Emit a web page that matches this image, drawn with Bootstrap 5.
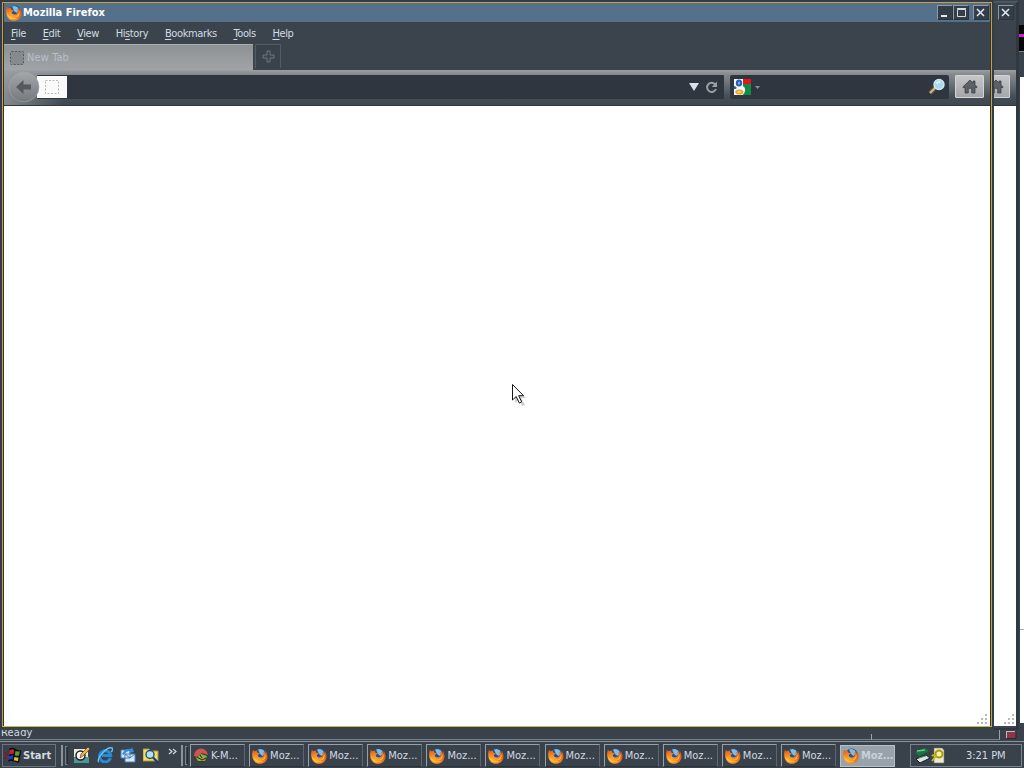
<!DOCTYPE html>
<html lang="en">
<head>
    <meta charset="UTF-8">
    <meta name="viewport" content="width=device-width, initial-scale=1.0">
    <title>Mozilla Firefox</title>
    <link rel="stylesheet" href="https://cdn.jsdelivr.net/npm/bootstrap@5.3.0/dist/css/bootstrap.min.css">
    <style>
        body {
            width: 1024px;
            height: 768px;
            background: #3b444d;
            color: #d3dae2;
            font-family: "DejaVu Sans Condensed", "DejaVu Sans", sans-serif;
            font-stretch: condensed;
            font-size: 11px;
            line-height: 14px;
            cursor: default;
        }
        svg { display: block; flex: none; }
        .desktop { width: 1024px; height: 768px; }

        /* windows on the desktop */
        .win { position: absolute; overflow: hidden; background: #3b444d; }
        .win-app { left: 1018px; top: 0; width: 6px; height: 723px; background: #39424b; }
        .win-app .strip { height: 25px; }
        .win-app .dark-row { height: 27px; background: #080709; border-bottom: 1px solid #77828c; padding-top: 9px; }
        .win-app .magenta { height: 3px; background: #cf22c8; }
        .win-app .gap-row { height: 25px; }
        .win-app .page { height: 646px; background: #fff; margin-left: 2px; padding-top: 552px; }
        .win-app .rule { height: 1px; background: #a4a8ab; }
        .win-back { left: 500px; top: 1px; width: 519px; height: 729px; border: 2px solid #30383f; border-top-color: #4c5660; border-right-width: 3px; }
        .win-front { left: 0; top: 0; width: 994px; height: 730px; border: 2px solid #353d42; border-left-color: #343b46; border-bottom: 3px solid #39424a; }
        .frame { height: 725px; width: 990px; border: 1px solid #c4a04b; border-bottom-color: #c3bd3c; }
        .inner { height: 723px; border: 1px solid #34342c; border-top: 0; border-bottom: 0; }

        .title-bar { height: 19px; background: #55708b; color: #fff; font-weight: bold; }
        .title-text { padding: 1px 0 0 1px; }
        .title-tools { padding-right: 1px; }
        .win-back .title-bar { background: #3c454e; padding-right: 2px; }
        .tool-btn { width: 16px; height: 15px; background: #343e49; border: 1px solid #8b9bab; border-right-color: #2b333c; border-bottom-color: #2b333c; }
        .menu-row { height: 22px; gap: 16.7px; padding: 1px 0 0 7px; }
        .menu-row div { letter-spacing: -.38px; }
        .menu-row u { text-underline-offset: 2px; text-decoration-thickness: 1px; }

        .tab-row { height: 26px; }
        .page-tab { width: 249px; height: 26px; background: linear-gradient(#8c9194, #979b9e 50%, #a0a4a8); border-top: 1px solid #a9aeb2; color: #b7bfcc; padding-left: 5px; }
        .page-tab div { margin-left: 2px; letter-spacing: .1px; padding-top: 1px; }
        .new-tab { width: 26px; height: 24px; margin-left: 2px; background: #39424b; border: 1px solid #535d66; border-bottom: 0; }
        .nav-row { height: 36px; padding-top: 5px; background: linear-gradient(90deg, rgba(155, 159, 163, .75), rgba(155, 159, 163, 0) 60px), linear-gradient(#9b9fa3 0, #858a8f 12%, #656d74 45%, #464f58 75%, #3e4750 100%); border-bottom: 1px solid #30373d; }
        .win-back .nav-row { background: linear-gradient(#9b9fa3 0, #858a8f 12%, #656d74 45%, #464f58 75%, #3e4750 100%); padding: 5px 6px 0 0; }
        .url-box { width: 687px; height: 24px; margin-left: 33px; background: #2f363f; border-radius: 1px; }
        .site-box { width: 30px; height: 22px; background: #fafafa; }
        .back-btn { left: 4px; top: 1px; z-index: 2; }
        .reload { margin: 0 5px 0 4px; }
        .search-box { width: 219px; height: 24px; margin-left: 6px; padding: 0 3px 0 4px; background: #2f363f; border-radius: 2px; }
        .home-btn { width: 29px; height: 23px; background: linear-gradient(#c4c6c8, #a4a6a9); border: 1px solid #d2d4d6; border-radius: 1px; }
        .win-front .home-btn { margin-left: 6px; }
        .page-area { background: #fff; height: 620px; padding: 0 2px 1px 0; }
        .win-back .page-area { padding-right: 1px; }
        .pointer { position: absolute; left: 511px; top: 383px; }

        /* status bar of the window behind, and the taskbar */
        .status-bar { position: absolute; left: 0; top: 726px; width: 1024px; height: 14px; background: #39424b; }
        .status-line { height: 14px; border-right: 1px solid #9aa4ad; border-bottom: 1px solid #77818b; }
        .status-msg { width: 871px; border-right: 0; letter-spacing: .2px; padding-left: 1px; }
        .status-tick { height: 6px; width: 1px; background: #9aa4ad; margin-top: 8px; }
        .status-rest { width: 128px; }
        .taskbar { position: absolute; left: 0; top: 740px; width: 1024px; height: 28px; padding-top: 1px; background: #39424b; }
        .taskbar-body { height: 27px; border-top: 1px solid #8b959e; padding: 2px 0 0 2px; }
        .start-btn { width: 54px; height: 23px; border: 1px solid #687581; font-weight: bold; }
        .start-text { margin-left: 2px; }
        .grip { width: 2px; height: 21px; margin: 1px 0 0 5px; background: #88939d; }
        .grip-thin { width: 3px; height: 19px; margin: 2px 0 0 2px; border: 1px solid #74808a; border-right-color: #252d35; }
        .quick { gap: 7px; margin: 3px 0 0 6px; }
        .chev { margin: 4px 0 0 9px; }
        .grip-end { margin-left: 4px; }
        .tasks { margin-left: 2px; gap: 4.1px; }
        .task-btn { width: 55px; height: 23px; border: 1px solid #95a0a9; border-right-color: #5c6771; border-bottom-color: #2b333a; white-space: nowrap; }
        .task-btn svg { margin-left: 2px; }
        .task-text { margin-left: 2px; }
        .task-btn.current { height: 22px; margin-top: 1px; background: #98a2ab; border-color: #b6bec6; color: #c9d0d8; font-weight: bold; letter-spacing: -.25px; }
        .tray { width: 112px; height: 23px; margin-left: 15px; padding-left: 2px; border: 1px solid #79858f; }
        .clock { margin-left: 17px; white-space: nowrap; letter-spacing: -.05px; }
    </style>
</head>
<body>
    <svg width="0" height="0" class="position-absolute">
        <defs>
            <radialGradient id="fox" cx=".3" cy=".75" r=".85">
                <stop offset="0" stop-color="#ffb433"/>
                <stop offset=".5" stop-color="#f58220"/>
                <stop offset="1" stop-color="#d9520f"/>
            </radialGradient>
            <linearGradient id="backFill" x2="0" y2="1">
                <stop offset="0" stop-color="#a3a7aa"/>
                <stop offset="1" stop-color="#74797e"/>
            </linearGradient>
            <symbol id="firefox" viewBox="0 0 16 16">
                <circle cx="8.500" cy="6.500" r="6" fill="#2a4f8c"/>
                <path d="M6 1.500 9 1l3 1.500 1 3-2.500 2.500L8 6z" fill="#7fbde2"/>
                <path d="M.9 1.800 2.300 3.300l2.400-.8.500 2 2.600.9-1.900 1.500c-.3 2 2.300 3.300 4.300 2.200 2.200-1.400 1.700-3.600 1-5.400 1 .3 1.700 1 2.100 1.900l.4-2.900c3.800 5.300 1.600 13-5.700 13.100C1.300 15.800-1.400 8.600.9 1.800z" fill="url(#fox)"/>
                <path d="M12.300 4.500c1.600 3.200 0 7.200-3.800 7.600 3.400.9 6.800-3 3.800-7.600z" fill="#ffd95a"/>
                <path d="M1 8c.5 5 6.500 7.500 10.500 5C7 14.500 2.500 12.500 1 8z" fill="#ffd95a"/>
            </symbol>
            <symbol id="close" viewBox="0 0 13 13">
                <path d="m3 3 7 7m0-7-7 7" stroke="#e5eaf0" stroke-width="1.5"/>
            </symbol>
            <symbol id="home" viewBox="0 0 16 15">
                <path d="M8 1 .8 8l1 1L3 8v6h3.300V9.300h3.400V14H13V8l1.200 1 1-1L13 5.800V2h-2v2z" fill="#5c6167" stroke="#33383f" stroke-width=".7"/>
            </symbol>
            <symbol id="grip" viewBox="0 0 12 12">
                <path d="M9 1h2v2H9zM5 5h2v2H5zM9 5h2v2H9zM1 9h2v2H1zM5 9h2v2H5zM9 9h2v2H9z" fill="#b9b9b2"/>
            </symbol>
        </defs>
    </svg>

    <div class="desktop position-relative overflow-hidden">
        <div class="status-bar d-flex">
            <div class="status-line status-msg">Ready</div>
            <div class="status-tick"></div>
            <div class="status-line status-rest"></div>
            <svg width="24" height="14"><path d="M6 5h10v7H6z" fill="#87394a"/><path d="M6 5.500h9M6.500 5v7" stroke="#c9b4bd"/><path d="M16 5v7.500H7" stroke="#2c252e" fill="none"/></svg>
        </div>

        <div class="win win-app">
            <div class="strip"></div>
            <div class="dark-row"><div class="magenta"></div></div>
            <div class="gap-row"></div>
            <div class="page"><div class="rule"></div></div>
        </div>

        <!-- Second browser window, mostly covered -->
        <div class="win win-back">
            <div class="title-bar d-flex justify-content-end align-items-center">
                <div class="tool-btn"><svg width="13" height="13"><use href="#close"/></svg></div>
            </div>
            <div class="menu-row"></div>
            <div class="tab-row"></div>
            <div class="nav-row d-flex justify-content-end">
                <div class="home-btn d-flex align-items-center justify-content-center"><svg width="16" height="15"><use href="#home"/></svg></div>
            </div>
            <div class="page-area d-flex justify-content-end align-items-end"><svg width="12" height="12"><use href="#grip"/></svg></div>
        </div>

        <!-- Active browser window -->
        <div class="win win-front">
            <div class="frame">
                <div class="inner">
                    <div class="title-bar d-flex align-items-center">
                        <svg width="18" height="16"><use href="#firefox" x="2" width="16" height="16"/></svg>
                        <div class="title-text flex-grow-1">Mozilla Firefox</div>
                        <div class="title-tools d-flex">
                            <div class="tool-btn"><svg width="13" height="13"><path d="M3 10h6" stroke="#e5eaf0" stroke-width="2"/></svg></div>
                            <div class="tool-btn"><svg width="13" height="13"><path d="M3.500 3.500h8v7h-8zM3 2.500h9" fill="none" stroke="#d3dae2"/></svg></div>
                            <div class="tool-btn ms-1"><svg width="13" height="13"><use href="#close"/></svg></div>
                        </div>
                    </div>
                    <div class="menu-row d-flex align-items-center">
                        <div><u>F</u>ile</div>
                        <div><u>E</u>dit</div>
                        <div><u>V</u>iew</div>
                        <div>Hi<u>s</u>tory</div>
                        <div><u>B</u>ookmarks</div>
                        <div><u>T</u>ools</div>
                        <div><u>H</u>elp</div>
                    </div>
                    <div class="tab-row d-flex">
                        <div class="page-tab d-flex align-items-center">
                            <svg width="16" height="16"><rect x="1.5" y="1.5" width="13" height="13" rx="1" fill="#858a8e" stroke="#555a60" stroke-dasharray="2 1.5"/></svg>
                            <div>New Tab</div>
                        </div>
                        <div class="new-tab d-flex align-items-center justify-content-center">
                            <svg width="15" height="15"><path d="M6 2h3v4h4v3H9v4H6V9H2V6h4z" fill="#3c454e" stroke="#6c757e"/></svg>
                        </div>
                    </div>
                    <div class="nav-row d-flex position-relative">
                        <svg class="back-btn position-absolute" width="32" height="32">
                            <circle cx="16" cy="16" r="15" fill="url(#backFill)" stroke="#a2a5a8" stroke-width=".6"/>
                            <path d="m8 16 7.500-7v4.500H23v5h-7.500V23z" fill="#565a5f"/>
                        </svg>
                        <div class="url-box d-flex align-items-center">
                            <div class="site-box d-flex align-items-center justify-content-center">
                                <svg width="16" height="16"><rect x="1.5" y="1.5" width="13" height="13" fill="none" stroke="#bcbcbc" stroke-dasharray="2 1.5"/></svg>
                            </div>
                            <div class="flex-grow-1"></div>
                            <svg width="12" height="10"><path d="M1 1h10L6 9z" fill="#dde0e7"/></svg>
                            <svg class="reload" width="15" height="15"><path d="M11.400 4.600A4.600 4.600 0 1 0 12 9" fill="none" stroke="#9ba0a6" stroke-width="2"/><path d="M13 1.500V7H7.700z" fill="#9ba0a6"/></svg>
                        </div>
                        <div class="search-box d-flex align-items-center">
                            <svg width="17" height="16">
                                <path d="M0 0h9v16H0z" fill="#f5f8fb"/>
                                <path d="M9 0h8v5H9z" fill="#e21818"/>
                                <path d="M9 5h8v11H9z" fill="#128b49"/>
                                <path d="M7 6q5 2 4 6-1 4-4 4H4z" fill="#f5f8fb"/>
                                <ellipse cx="5" cy="4" rx="3.200" ry="3.500" fill="#235fb9"/>
                                <ellipse cx="5" cy="4" rx="1" ry="1.600" fill="#8db5ea"/>
                                <ellipse cx="5.300" cy="13" rx="3.200" ry="1.700" fill="#ffe4b0" stroke="#efa225" stroke-width="1.800"/>
                                <path d="M0 7q4 1 2 3H0z" fill="#3b5c94"/>
                            </svg>
                            <svg width="13" height="10"><path d="M4 4h5L6.500 7z" fill="#8a9096"/></svg>
                            <div class="flex-grow-1"></div>
                            <svg width="18" height="18"><path d="m2 15 7-7" stroke="#665b4a" stroke-width="4"/><path d="m2 15 6-6" stroke="#d6b77e" stroke-width="2"/><circle cx="11" cy="6.500" r="5" fill="#a7d8eb" stroke="#d4e9f0" stroke-width="1.400"/><path d="M8.500 5.500q2-2.500 4-1" stroke="#edfaff" fill="none" stroke-width="1.500"/></svg>
                        </div>
                        <div class="home-btn d-flex align-items-center justify-content-center"><svg width="16" height="15"><use href="#home"/></svg></div>
                    </div>
                    <div class="page-area d-flex justify-content-end align-items-end"><svg width="12" height="12"><use href="#grip"/></svg></div>
                </div>
            </div>
        </div>

        <div class="taskbar">
            <div class="taskbar-body d-flex">
                <div class="start-btn d-flex align-items-center">
                    <svg width="18" height="17"><path d="M7 3q3-2 5 0l-1 5q-3-2-5 0z" fill="#b92637"/><path d="m12.500 3 5 1-1 5-5-1z" fill="#5f9a22"/><path d="M5.500 9q3-2 5 0l-1 5q-3-2-5 0z" fill="#2d36bd"/><path d="m11 9 5 1-1 5-5-1z" fill="#d5c52f"/><path d="M1 5h2v2H1zM4 4h2v2H4zM1 10h2v2H1zM3 7h2v2H3z" fill="#7e1829"/><path d="M6 2.500q4-2 6 0t5.500 1M6 8.500q4-2 5 0t5 1M12 3l-2 11m7.500-10-2 11-5-1q-3-2-5 0" stroke="#090a10" stroke-width="1.300" fill="none"/></svg>
                    <div class="start-text">Start</div>
                </div>
                <div class="grip"></div>
                <div class="grip-thin"></div>
                <div class="quick d-flex">
                    <svg width="16" height="16"><path d="M0 2h14v13H0z" fill="#e6eadb"/><path d="M0 10h15v6H0z" fill="#4c9795"/><circle cx="6.500" cy="8.500" r="4.500" fill="#fff" stroke="#222" stroke-width="1.500"/><path d="m6 11 1-4 7-7 2 2-7 7z" fill="#edb345" stroke="#6a341c" stroke-width=".7"/></svg>
                    <svg width="16" height="16"><path d="M13.500 11A5.600 5.600 0 1 1 13.700 8.500H5" fill="none" stroke="#248bd6" stroke-width="3"/><path d="M2 15C-2 13 10-1 15 1q2 1-1 4" fill="none" stroke="#69c2f4" stroke-width="1.400"/></svg>
                    <svg width="16" height="16"><path d="M1 3h9v8H1zM5 7h10v8H5z" fill="#d8e9fa" stroke="#477dbb"/><path d="m5 7 5 4 5-4" fill="none" stroke="#477dbb"/><path d="M2 7q3-6 9-5l1-2 2 5-5 1 1-2q-4 0-6 4z" fill="#348cdf"/></svg>
                    <svg width="16" height="16"><path d="M0 2h6l2 2h7v10H0z" fill="#f2dc65" stroke="#ad9435"/><circle cx="7" cy="7.500" r="4" fill="#aee2ef" stroke="#26516e" stroke-width="1.400"/><path d="m10 10.500 5 5" stroke="#173f7c" stroke-width="2.300"/></svg>
                </div>
                <svg class="chev" width="9" height="8"><path d="m1 1 3 2.500L1 6m4-5 3 2.500L5 6" fill="none" stroke="#d3dae2" stroke-width="1.200"/></svg>
                <div class="grip grip-end"></div>
                <div class="grip-thin"></div>
                <div class="tasks d-flex" id="tasks">
                    <div class="task-btn d-flex align-items-center">
                        <svg width="16" height="16"><circle cx="8" cy="8" r="7" fill="#394023"/><path d="M1 8a7 7 0 0 1 14-1L9 5 4 9z" fill="#ce5356"/><path d="m3 10 5-4 6 2-2 5H5z" fill="#8eab48"/><path d="m4 9 5 3 4-2M7 7l2 3" stroke="#242d18" fill="none"/></svg>
                        <div class="task-text">K-M...</div>
                    </div>
                </div>
                <div class="tray d-flex align-items-center">
                    <svg width="36" height="18"><path d="m2 5 10-4 4 3L6 9z" fill="#157844"/><path d="m4 4 8-1" stroke="#67cb83" stroke-width="1.500"/><path d="m3 12 10-4 4 3-10 5z" fill="#dce5e4" stroke="#14201d"/><path d="m6 11 7-2" stroke="#42a76b"/><path d="M21 1h8l2 2v13H21z" fill="#ebe9d2" stroke="#777458" stroke-width=".6"/><circle cx="26" cy="7" r="3.500" fill="#fff3a0" stroke="#a79a13" stroke-width="2"/><path d="m23 9-4 5m0-5q2-2 4 1" stroke="#c5b524" stroke-width="2" fill="none"/></svg>
                    <div class="clock">3:21 PM</div>
                </div>
            </div>
        </div>

        <svg class="pointer" width="17" height="24">
            <path d="m4 4 11 11h-5l4 7-3 1-3-6-4 3z" fill="#aaa" opacity=".55"/>
            <path d="M1.500 1.500v15.500l3.700-3.500 3.100 6.500 2.400-1.100-3-6.200h4.800z" fill="#fff" stroke="#17171b"/>
        </svg>
    </div>

    <script src="https://cdn.jsdelivr.net/npm/bootstrap@5.3.0/dist/js/bootstrap.bundle.min.js"></script>
    <script>
        // one taskbar button per browser window, the last one is active
        const tasks = document.getElementById('tasks');
        for (let i = 0; i < 11; i++) {
            const btn = document.createElement('div');
            btn.className = 'task-btn d-flex align-items-center' + (i === 10 ? ' current' : '');
            btn.innerHTML = '<svg width="16" height="16"><use href="#firefox"/></svg><div class="task-text">Moz...</div>';
            tasks.appendChild(btn);
        }
    </script>
</body>
</html>
